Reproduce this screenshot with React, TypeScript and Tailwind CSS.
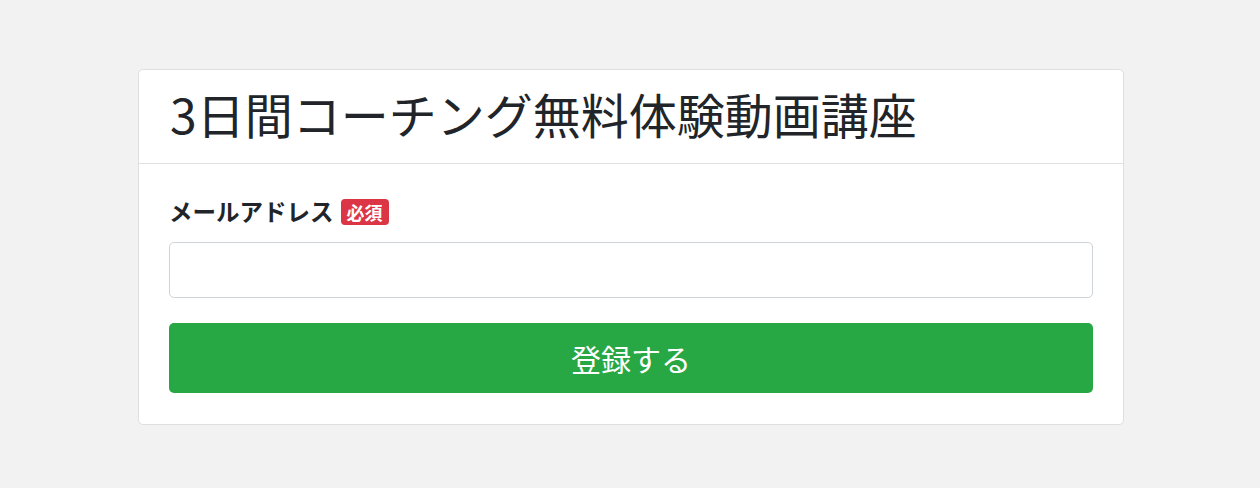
export default function App() {
  const font = {
    fontFamily: '"Noto Sans CJK JP", "Noto Sans", sans-serif',
  };

  return (
    <div
      className="w-full h-[488px] bg-[#f2f2f2] flex justify-center pt-[69px] pl-[2px]"
      style={font}
    >
      <div className="w-[986px] h-[356px] bg-white border border-[#dfdfdf] rounded-[5px] flex flex-col">
        <div className="h-[94px] border-b border-[#dfdfdf] flex items-center px-[31px] pb-[8px]">
          <h1 className="text-[48px] leading-none text-[#212529] font-normal">
            3日間コーチング無料体験動画講座
          </h1>
        </div>
        <div className="px-[30px] pt-[30px] pb-[31px] flex flex-col">
          <div className="h-[36px] flex items-center gap-[7px] mb-3">
            <span className="text-[23.5px] font-bold text-[#212529]">
              メールアドレス
            </span>
            <span className="h-[26px] px-[6px] rounded-[4px] bg-[#dc3545] text-white text-[18px] font-bold flex items-center leading-none">
              必須
            </span>
          </div>
          <input
            type="text"
            className="h-[56px] w-full border border-[#ced4da] rounded-[5px] px-4 text-[22px] outline-none"
          />
          <button className="mt-[25px] h-[70px] w-full bg-[#28a745] rounded-[5px] text-white text-[30px] flex items-center justify-center">
            登録する
          </button>
        </div>
      </div>
    </div>
  );
}
